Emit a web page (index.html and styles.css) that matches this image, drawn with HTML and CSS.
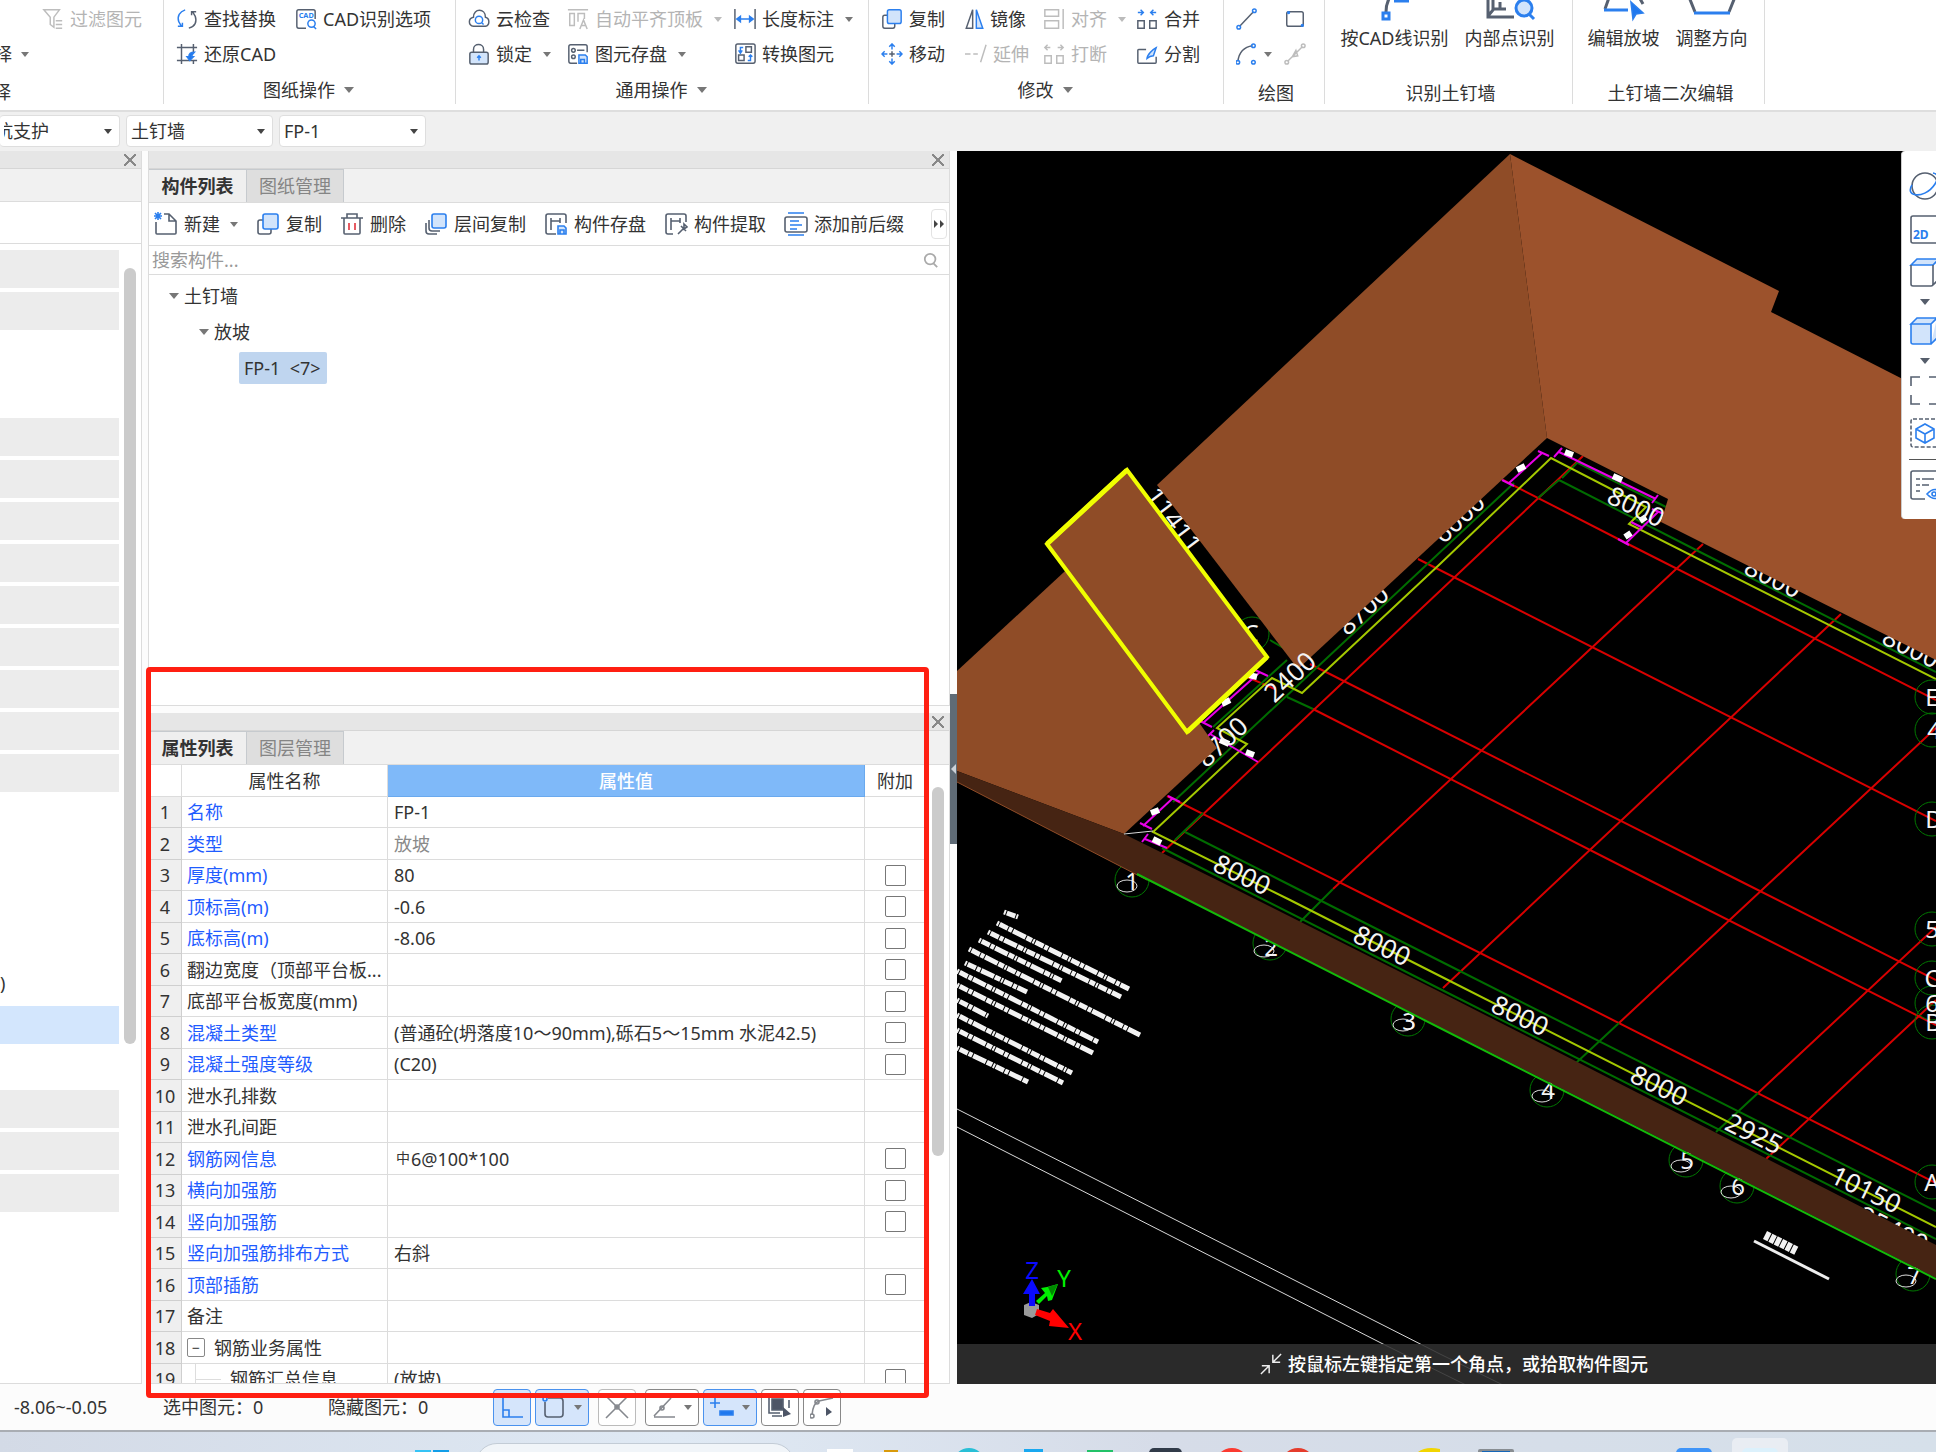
FILE: index.html
```
<!DOCTYPE html>
<html lang="zh-CN">
  <head>
    <meta charset="UTF-8" />
    <meta name="viewport" content="width=device-width, initial-scale=1.0" />
    <title>土钉墙 - 构件列表</title>
    <link rel="stylesheet" href="styles.css">
  </head>
  <body>
    <!-- Shared icons -->
    <svg class="defs" aria-hidden="true">
      <symbol id="i-copy" viewBox="0 0 24 24"><path class="d" d="M7 8H4a2 2 0 0 0-2 2v10a2 2 0 0 0 2 2h9a2 2 0 0 0 2-2v-3" /><rect class="b f" x="7" y="2" width="15" height="15" rx="2" /></symbol>
      <symbol id="i-layer" viewBox="0 0 24 24"><path class="d" d="M5 8v8a3 3 0 0 0 3 3h8M2 11v8a3 3 0 0 0 3 3h8" /><rect class="b f" x="8" y="2" width="14" height="14" rx="2" /></symbol>
      <symbol id="i-save" viewBox="0 0 24 24"><path class="d" d="M12 22H4a2 2 0 0 1-2-2V4a2 2 0 0 1 2-2h16a2 2 0 0 1 2 2v7M7 6v12M7 9h9M16 6v5" /><path class="b f" d="M14 14h6l2 2v6h-8zM16 22v-4h4v4" /></symbol>
      <symbol id="i-cube" viewBox="0 0 30 30"><path d="M2 8h20v20H4q-2 0-2-2zM2 8l6-6h20l-6 6zM22 28l6-6V2" /></symbol>
    </svg>

    <header class="ribbon">
      <section class="group g-select">
        <div class="tools">
          <button class="tool off" disabled><svg class="icon" viewBox="0 0 24 24"><path d="M2 2h17l-6 8v11l-4-3v-8zM15 14h7M15 18h7M15 22h7" /></svg>过滤图元</button>
          <button class="tool cut">择<i class="caret"></i></button>
        </div>
        <h2 class="cut">择</h2>
      </section>
      <section class="group g-drawing">
        <div class="tools">
          <button class="tool"><svg class="icon" viewBox="0 0 24 24"><path class="b" d="M10 2C4 4 1 9 3 15l3 5M2 20h5v-4" /><path class="d" d="M14 22c7-2 9-7 7-13l-3-5M22 4h-5v4" /></svg>查找替换</button>
          <button class="tool"><svg class="icon" viewBox="0 0 24 24"><path class="d" d="M12 22H4a2 2 0 0 1-2-2V4a2 2 0 0 1 2-2h16a2 2 0 0 1 2 2v8" /><text class="tiny" x="4" y="11">CAD</text><circle class="b" cx="18" cy="17" r="4" /><path class="b" d="M20 20l3 3" /></svg>CAD识别选项</button>
          <button class="tool"><svg class="icon" viewBox="0 0 24 24"><path class="d" d="M6 1v22M19 1v9M19 19v4M1 5h22M1 19h22" /><path class="b bf" d="M20 10c-4 0-6 2-6 5h-2l3 4 4-4h-2c0-2 1-3 3-5z" /></svg>还原CAD</button>
        </div>
        <h2>图纸操作<i class="caret big"></i></h2>
      </section>
      <section class="group g-common">
        <div class="tools">
          <button class="tool"><svg class="icon" viewBox="0 0 24 24"><path class="d" d="M6 20c-6-1-6-9 0-10 0-10 13-10 13 0 5 1 5 9 0 10z" /><circle class="b" cx="12" cy="13" r="4" /><path class="b" d="M15 16l2 2" /></svg>云检查</button>
          <button class="tool off" disabled><svg class="icon" viewBox="0 0 24 24"><path d="M1 2h22M3 6h5v13H3zM12 15V6h7v6M14 23l4-10 4 10M15 19h6" /></svg>自动平齐顶板<i class="caret"></i></button>
          <button class="tool"><svg class="icon" viewBox="0 0 24 24"><path class="d" d="M1 1v22M23 1v22" /><path class="b bf" d="M3 12h18M7 9l-4 3 4 3zM17 9l4 3-4 3z" /></svg>长度标注<i class="caret"></i></button>
          <button class="tool"><svg class="icon" viewBox="0 0 24 24"><path class="d" d="M6 11V7c0-7 11-7 11 0v4" /><rect class="d f" x="2" y="10" width="20" height="13" rx="2" /><path class="b" d="M12 14v5M10 16l2-2 2 2" /></svg>锁定<i class="caret"></i></button>
          <button class="tool"><svg class="icon" viewBox="0 0 24 24"><path class="d" d="M11 22H4a2 2 0 0 1-2-2V4a2 2 0 0 1 2-2h16a2 2 0 0 1 2 2v6M11 8h8" /><circle class="d" cx="7" cy="8" r="2" /><circle class="d" cx="7" cy="15" r="2" /><path class="b f" d="M13 13h7l2 2v7h-9zM15 22v-4h4v4" /></svg>图元存盘<i class="caret"></i></button>
          <button class="tool"><svg class="icon" viewBox="0 0 24 24"><rect class="d" x="2" y="1" width="21" height="21" rx="2" /><path class="d" d="M13 4h6v6h-6zM5 13h6v6H5z" /><path class="b" d="M10 5H7v5M5 8l2 3 2-3M15 19h3v-5M16 15l2-2 2 2" /></svg>转换图元</button>
        </div>
        <h2>通用操作<i class="caret big"></i></h2>
      </section>
      <section class="group g-modify">
        <div class="tools">
          <button class="tool"><svg class="icon"><use href="#i-copy" /></svg>复制</button>
          <button class="tool"><svg class="icon narrow" viewBox="0 0 20 24"><path class="d" d="M8 2v20H1z" /><path class="b f" d="M12 2v20h7z" /></svg>镜像</button>
          <button class="tool off" disabled><svg class="icon" viewBox="0 0 24 24"><path d="M2 2h15v7H2zM2 14h15v8H2zM22 1v22" /></svg>对齐<i class="caret"></i></button>
          <button class="tool"><svg class="icon" viewBox="0 0 24 24"><path class="b" d="M2 5h6M5 2l3 3-3 3M22 5h-6M19 2l-3 3 3 3" /><path class="d" d="M2 14h7v8H2zM15 14h7v8h-7z" /></svg>合并</button>
          <button class="tool"><svg class="icon" viewBox="0 0 24 24"><path class="b" d="M12 1v6M9 4l3-3 3 3M12 17v6M9 20l3 3 3-3M1 12h6M4 9l-3 3 3 3M17 12h6M20 9l3 3-3 3" /><path class="d" d="M12 9v6M9 12h6" /></svg>移动</button>
          <button class="tool off" disabled><svg class="icon" viewBox="0 0 24 24"><path d="M0 12h6M9 12h5M23 2l-6 19" /></svg>延伸</button>
          <button class="tool off" disabled><svg class="icon" viewBox="0 0 24 24"><path d="M2 5h6M5 2L2 5l3 3M22 5h-6M19 2l3 3-3 3M2 14h7v8H2zM15 14h7v8h-7z" /></svg>打断</button>
          <button class="tool"><svg class="icon" viewBox="0 0 24 24"><path class="d" d="M11 7H3q-1 0-1 1v13q0 1 1 1h18q1 0 1-1v-6" /><path class="b f" d="M12 17c0-4 6-10 10-12l-3 9c-2 0-5 1-7 3z" /></svg>分割</button>
        </div>
        <h2>修改<i class="caret big"></i></h2>
      </section>
      <section class="group g-draw">
        <div class="tools">
          <button class="tool" aria-label="直线"><svg class="icon" viewBox="0 0 24 24"><path class="d" d="M4 20L19 4" /><circle class="b" cx="3" cy="21" r="2" /><circle class="b" cx="20" cy="3" r="2" /></svg></button>
          <button class="tool" aria-label="矩形"><svg class="icon" viewBox="0 0 24 24"><rect class="d" x="3" y="4" width="18" height="16" rx="2" /><circle class="b" cx="5" cy="5" r="1" /><circle class="b" cx="20" cy="19" r="1" /></svg></button>
          <button class="tool" aria-label="弧线"><svg class="icon" viewBox="0 0 24 24"><path class="d" d="M2 20Q4 5 18 3" /><circle class="b" cx="2" cy="21" r="2" /><circle class="b" cx="19" cy="3" r="2" /><circle class="b" cx="19" cy="21" r="2" /></svg><i class="caret"></i></button>
          <button class="tool off" disabled aria-label="点加长度"><svg class="icon" viewBox="0 0 24 24"><path d="M4 20L20 4M9 15l4-7 2 6z" /><circle cx="3" cy="21" r="2" /><circle cx="21" cy="3" r="2" /></svg></button>
        </div>
        <h2 class="low">绘图</h2>
      </section>
      <section class="group g-detect">
        <div class="tools large">
          <button class="tool"><svg class="icon-l" viewBox="0 0 36 30"><path class="d w" d="M9 20Q9 8 17 0" /><path class="b w" d="M17 9h15M6 21h6v6H6z" /></svg>按CAD线识别</button>
          <button class="tool"><svg class="icon-l" viewBox="0 0 36 30"><path class="d w" d="M-4 0v25h26M1 0v18l-5 6M1 17h13M8 10v7" /><circle class="b w f" cx="32" cy="16" r="8" /><path class="b w" d="M37 22l5 5" /></svg>内部点识别</button>
        </div>
        <h2 class="low">识别土钉墙</h2>
      </section>
      <section class="group g-edit">
        <div class="tools large">
          <button class="tool"><svg class="icon-l" viewBox="0 0 36 30"><path class="d w" d="M5 0L-1 17M33 5l4 7" /><path class="b w" d="M-2 18h24" /><path class="b bf" d="M25 10l12 11-7 1-3 5z" /></svg>编辑放坡</button>
          <button class="tool"><svg class="icon-l" viewBox="0 0 36 30"><path class="d w" d="M-5 5l6 15M41 5l-6 15" /><path class="b w" d="M0 21h36" /></svg>调整方向</button>
        </div>
        <h2 class="low">土钉墙二次编辑</h2>
      </section>
    </header>

    <nav class="filters">
      <label class="pick first"><select aria-label="专业"><option>基坑支护</option></select></label>
      <label class="pick"><select aria-label="构件类型"><option>土钉墙</option></select></label>
      <label class="pick"><select aria-label="构件"><option>FP-1</option></select></label>
    </nav>

    <main class="workspace">
      <aside class="panel nav-panel">
        <div class="title-bar"><button class="close" aria-label="关闭"></button></div>
        <div class="nav-head"></div>
        <div class="nav-tools"></div>
        <div class="nav-body">
          <ul class="nav-list">
            <li class="fill"></li><li class="fill"></li><li></li><li></li><li class="fill"></li><li class="fill"></li>
            <li class="fill"></li><li class="fill"></li><li class="fill"></li><li class="fill"></li><li class="fill"></li>
            <li class="fill"></li><li class="fill"></li><li></li><li></li><li></li><li></li><li>)</li>
            <li class="current"></li><li></li><li class="fill"></li><li class="fill"></li><li class="fill"></li>
          </ul>
          <div class="thumb"></div>
        </div>
      </aside>

      <div class="docks">
        <section class="panel">
          <div class="title-bar"><button class="close" aria-label="关闭"></button></div>
          <div class="tabs"><button class="tab active">构件列表</button><button class="tab">图纸管理</button></div>
          <div class="list-tools">
            <button class="tool"><svg class="icon" viewBox="0 0 24 24"><path class="d" d="M2 10v11q0 1 1 1h18q1 0 1-1V9l-7-7h-5M15 2v7h7" /><path class="b" d="M0 4h8M4 0v8M1 1l6 6M7 1L1 7" /></svg>新建<i class="caret"></i></button>
            <button class="tool"><svg class="icon"><use href="#i-copy" /></svg>复制</button>
            <button class="tool"><svg class="icon" viewBox="0 0 24 24"><path class="d" d="M1 6h22M7 6V2h10v4M4 6v15q0 1 1 1h14q1 0 1-1V6" /><path class="r" d="M9 11v7M15 11v7" /></svg>删除</button>
            <button class="tool"><svg class="icon"><use href="#i-layer" /></svg>层间复制</button>
            <button class="tool"><svg class="icon"><use href="#i-save" /></svg>构件存盘</button>
            <button class="tool"><svg class="icon" viewBox="0 0 24 24"><path class="d" d="M9 22H4a2 2 0 0 1-2-2V4a2 2 0 0 1 2-2h16a2 2 0 0 1 2 2v6M7 6v12M7 9h9M16 6v5M14 22l5-5M17 14l5 5M20 12l3 3-3 2z" /></svg>构件提取</button>
            <button class="tool"><svg class="icon" viewBox="0 0 24 24"><rect class="d" x="1" y="5" width="22" height="15" rx="2" /><path class="b" d="M4 1h16M4 23h16M6 9h9M6 13h12M6 17h7" /></svg>添加前后缀</button>
            <button class="more" aria-label="更多"><svg viewBox="0 0 10 8"><path d="M0 0l4 4-4 4zM6 0l4 4-4 4z" /></svg></button>
          </div>
          <div class="search">
            <input type="text" placeholder="搜索构件..." aria-label="搜索构件">
            <svg class="icon-s" viewBox="0 0 18 18"><circle cx="8" cy="8" r="6" /><path d="M12 13l4 4" /></svg>
          </div>
          <ul class="tree">
            <li><i class="caret big"></i>土钉墙</li>
            <li class="l2"><i class="caret big"></i>放坡</li>
            <li class="l3"><span>FP-1  &lt;7&gt;</span></li>
          </ul>
        </section>

        <section class="panel">
          <div class="title-bar"><button class="close" aria-label="关闭"></button></div>
          <div class="tabs"><button class="tab active">属性列表</button><button class="tab">图层管理</button></div>
          <div class="props-body">
            <table class="props">
              <colgroup><col class="c-num"><col class="c-name"><col><col class="c-add"></colgroup>
              <thead>
                <tr><th></th><th>属性名称</th><th class="picked">属性值</th><th>附加</th></tr>
              </thead>
              <tbody>
                <tr><td>1</td><td class="key">名称</td><td>FP-1</td><td></td></tr>
                <tr><td>2</td><td class="key">类型</td><td class="muted">放坡</td><td></td></tr>
                <tr><td>3</td><td class="key">厚度(mm)</td><td>80</td><td><input type="checkbox" aria-label="附加 厚度"></td></tr>
                <tr><td>4</td><td class="key">顶标高(m)</td><td>-0.6</td><td><input type="checkbox" aria-label="附加 顶标高"></td></tr>
                <tr><td>5</td><td class="key">底标高(m)</td><td>-8.06</td><td><input type="checkbox" aria-label="附加 底标高"></td></tr>
                <tr><td>6</td><td>翻边宽度（顶部平台板...</td><td></td><td><input type="checkbox" aria-label="附加 翻边宽度"></td></tr>
                <tr><td>7</td><td>底部平台板宽度(mm)</td><td></td><td><input type="checkbox" aria-label="附加 底部平台板宽度"></td></tr>
                <tr><td>8</td><td class="key">混凝土类型</td><td>(普通砼(坍落度10～90mm),砾石5～15mm 水泥42.5)</td><td><input type="checkbox" aria-label="附加 混凝土类型"></td></tr>
                <tr><td>9</td><td class="key">混凝土强度等级</td><td>(C20)</td><td><input type="checkbox" aria-label="附加 混凝土强度等级"></td></tr>
                <tr><td>10</td><td>泄水孔排数</td><td></td><td></td></tr>
                <tr><td>11</td><td>泄水孔间距</td><td></td><td></td></tr>
                <tr><td>12</td><td class="key">钢筋网信息</td><td><span class="rebar">中</span>6@100*100</td><td><input type="checkbox" aria-label="附加 钢筋网信息"></td></tr>
                <tr><td>13</td><td class="key">横向加强筋</td><td></td><td><input type="checkbox" aria-label="附加 横向加强筋"></td></tr>
                <tr><td>14</td><td class="key">竖向加强筋</td><td></td><td><input type="checkbox" aria-label="附加 竖向加强筋"></td></tr>
                <tr><td>15</td><td class="key">竖向加强筋排布方式</td><td>右斜</td><td></td></tr>
                <tr><td>16</td><td class="key">顶部插筋</td><td></td><td><input type="checkbox" aria-label="附加 顶部插筋"></td></tr>
                <tr><td>17</td><td>备注</td><td></td><td></td></tr>
                <tr><td>18</td><td><div class="branch"><button class="fold" aria-label="折叠">−</button>钢筋业务属性</div></td><td></td><td></td></tr>
                <tr><td>19</td><td><div class="leaf">钢筋汇总信息</div></td><td>(放坡)</td><td><input type="checkbox" aria-label="附加 钢筋汇总信息"></td></tr>
              </tbody>
            </table>
            <div class="thumb"></div>
          </div>
        </section>
        <div class="marker"></div>
        <div class="splitter"></div>
      </div>

      <section class="viewport">
        <svg class="scene" viewBox="957 151 979 1233" preserveAspectRatio="xMinYMin slice">
          <!-- Sheet border -->
          <path class="sheet" d="M957 1109L1440 1354L1503 1385M957 1127L1383 1344L1466 1385" />
          <!-- Axis grid -->
          <path class="axis" d="M1583 456L1162 853M1703 544L1333 889M1841 614L1443 988M1936 728L1619 1023M1936 927L1758 1093M1936 1000L1766 1159" />
          <path class="axis" d="M1503 480L1626 543L1936 700M1418 559L1936 821M1310 664L1738 880L1936 980M1247 677L1275 689M1313 709L1649 880L1936 1025M1167 796L1375 900L1936 1183" />
          <!-- Dimension lines -->
          <path class="dim" d="M1173 802L1514 483M1213 727L1287 660M1578 463L1666 507M1559 480L1696 550L1936 672M1559 480L1538 498M1185 832L1280 880L1440 961L1936 1211M1162 848L1440 989L1936 1239M1287 697L1313 709M1203 813L1175 840M1333 889L1300 922M1619 1023L1576 1063M1758 1093L1716 1132M1562 478L1580 460M1270 640L1287 650" />
          <path class="edge" d="M1936 1227L1440 976L1290 900L1153 832L1247 744L1217 728L1272 678L1302 693L1440 564L1551 458L1646 507L1629 524L1936 679" />
          <path class="mark" d="M1143 826L1173 798M1140 823L1152 829M1168 796L1180 802M1145 839L1167 848M1148 834L1142 842M1203 723L1260 672M1200 721L1212 727M1255 670L1268 676M1210 734L1258 762M1214 730L1207 737M1509 483L1542 453M1502 480L1514 486M1538 451L1549 456M1559 452L1656 499M1562 448L1554 457M1658 495L1652 503M1626 543L1658 512M1618 539L1629 545M1652 509L1664 514M1631 522L1643 528" />
          <path class="blob" d="M1151 813L1159 810M1153 839L1161 843M1249 675L1257 677M1222 704L1230 700M1220 740L1229 744M1246 752L1254 755M1517 470L1525 466M1565 452L1573 455M1613 476L1622 480M1625 537L1631 533M1640 521L1646 517" />
          <!-- Axis bubbles -->
          <g class="bubble">
            <circle cx="1132" cy="880" r="17" /><circle cx="1270" cy="943" r="17" /><circle cx="1408" cy="1019" r="17" /><circle cx="1547" cy="1090" r="17" />
            <circle cx="1686" cy="1160" r="17" /><circle cx="1737" cy="1186" r="17" /><circle cx="1913" cy="1274" r="17" /><circle cx="1252" cy="634" r="17" />
            <circle cx="1932" cy="697" r="17" /><circle cx="1932" cy="730" r="17" /><circle cx="1932" cy="819" r="17" /><circle cx="1932" cy="929" r="17" />
            <circle cx="1932" cy="978" r="17" /><circle cx="1932" cy="1003" r="17" /><circle cx="1932" cy="1022" r="17" /><circle cx="1932" cy="1182" r="17" />
          </g>
          <g class="ring">
            <ellipse cx="1127" cy="886" rx="10" ry="6" /><ellipse cx="1264" cy="951" rx="10" ry="6" /><ellipse cx="1403" cy="1025" rx="10" ry="6" /><ellipse cx="1542" cy="1096" rx="10" ry="6" />
            <ellipse cx="1681" cy="1166" rx="10" ry="6" /><ellipse cx="1731" cy="1192" rx="10" ry="6" /><ellipse cx="1906" cy="1281" rx="10" ry="6" />
          </g>
          <g class="tag">
            <text x="1132" y="890">1</text><text x="1271" y="956">2</text><text x="1409" y="1030">3</text><text x="1548" y="1099">4</text>
            <text x="1687" y="1169">5</text><text x="1738" y="1195">6</text><text x="1914" y="1284">7</text><text x="1251" y="642">C</text>
            <text x="1932" y="706">E</text><text x="1934" y="739">4</text><text x="1934" y="828">D</text><text x="1932" y="938">5</text>
            <text x="1932" y="987">C</text><text x="1932" y="1012">6</text><text x="1933" y="1031">B</text><text x="1932" y="1191">A</text>
          </g>
          <g class="size">
            <text transform="translate(1242 875) rotate(26)" y="9">8000</text>
            <text transform="translate(1382 946) rotate(26)" y="9">8000</text>
            <text transform="translate(1520 1016) rotate(26)" y="9">8000</text>
            <text transform="translate(1659 1086) rotate(26)" y="9">8000</text>
            <text transform="translate(1754 1134) rotate(26)" y="9">2925</text>
            <text transform="translate(1866 1190) rotate(26)" y="9">10150</text>
            <text transform="translate(1893 1230) rotate(26)" y="9">25400</text>
            <text transform="translate(1636 507) rotate(26)" y="9">8000</text>
            <text transform="translate(1773 578) rotate(26)" y="9">8000</text>
            <text transform="translate(1911 648) rotate(26)" y="9">8000</text>
            <text transform="translate(1459 518) rotate(-43)" y="9">6000</text>
            <text transform="translate(1363 610) rotate(-43)" y="9">8700</text>
            <text transform="translate(1222 742) rotate(-43)" y="9">8700</text>
            <text transform="translate(1174 520) rotate(53)" y="9">11411</text>
          </g>
          <!-- Slope faces -->
          <path class="face" d="M1510 154L1157 485L1298 669L1547 438z" />
          <path class="face lit" d="M1510 154L1779 291L1771 312L1936 396V660L1661 522L1668 499L1547 438z" />
          <path class="face" d="M957 671L1077 560L1200 724L1217 748L1124 834L957 771z" />
          <path class="face dark" d="M957 771L1124 834L1217 880L1440 992L1936 1245V1278L1440 1027L1147 880L957 782z" />
          <path class="rim" d="M957 782L1147 880" />
          <path class="toe" d="M1137 874L1440 1028L1936 1279" />
          <path class="picked" d="M1127 470L1047 544L1187 732L1267 657z" />
          <path class="picked thick" d="M1127 470L1047 544M1187 732L1267 657" />
          <path class="sheet" d="M1124 834L1153 831" />
          <text class="single" transform="translate(1290 677) rotate(-43)" y="9">2400</text>
          <!-- Design notes, too small to be readable at this zoom -->
          <path class="notes" d="M1004 912L1018 917M997 923L1129 989M988 932L1121 997M979 940L1062 981M969 949L1140 1035M965 963L1027 992M957 971L1098 1042M957 985L1093 1053M957 1000L988 1016M957 1015L1072 1073M957 1030L1063 1083M957 1048L1028 1082" />
          <path class="notes name" d="M1765 1235L1797 1251" />
          <path class="under" d="M1754 1241L1829 1279" />
          <!-- Axis tripod -->
          <path fill="#9a9a9a" d="M1024 1305l7-3 8 3v9l-7 4-8-3z" />
          <path fill="#0a0aff" d="M1029 1306v-12h-6l9-15 8 15h-5v12z" />
          <path fill="#00f000" d="M1036 1301l9-8-4-5 6-1 11-3-6 16-4 1-1-5-8 8z" />
          <path fill="#008a00" d="M1058 1284l-6 12-4-9z" />
          <path fill="#f00" d="M1037 1309l13 4 3-4 16 19-20-2 1-5-15-6z" />
          <g class="tripod"><text x="1032" y="1279" fill="#0a0aff">Z</text><text x="1064" y="1287" fill="#00f000">Y</text><text x="1075" y="1340" fill="#f00">X</text></g>
        </svg>

        <div class="view-tools">
          <button aria-label="动态观察"><svg viewBox="0 0 30 30"><circle class="d" cx="16" cy="15" r="13" /><path class="b" d="M24 2c6 1 5 6 2 11-5 8-15 13-22 10-4-2-3-6-1-9" /></svg></button>
          <button aria-label="二维视图"><svg viewBox="0 0 30 30"><rect class="d" x="2" y="2" width="34" height="27" rx="2" /><text x="4" y="25">2D</text></svg></button>
          <button aria-label="俯视"><svg viewBox="0 0 30 30"><path class="b f" d="M2 8l6-6h22l-6 6z" /><path class="d" d="M2 8v19q0 2 2 2h18q2 0 2-2V8M24 28l6-6" /></svg></button>
          <i class="caret big"></i>
          <button aria-label="实体显示"><svg class="b f" viewBox="0 0 30 30"><use href="#i-cube" /></svg></button>
          <i class="caret big"></i>
          <button aria-label="全屏"><svg viewBox="0 0 30 30"><path class="d" d="M2 11V2h9M20 2h12M2 20v9h9M20 29h12" /></svg></button>
          <button aria-label="局部三维"><svg viewBox="0 0 30 30"><rect class="d dash" x="2" y="1" width="34" height="28" rx="2" /><path class="b" d="M16 6l9 5v9l-9 5-9-5v-9zM7 11l9 5 9-5M16 16v9" /></svg></button>
          <hr>
          <button aria-label="显示设置"><svg viewBox="0 0 30 30"><path class="d" d="M32 1H4Q2 1 2 3v24q0 2 2 2h12M7 9h4M13 9h12M7 15h4M13 15h7M7 21h4" /><path class="b" d="M18 24q8-9 16 0-8 9-16 0z" /><circle class="b" cx="25" cy="24" r="2" /></svg></button>
        </div>
        <p class="hint"><svg viewBox="0 0 24 24"><path d="M23 1l-9 9M14 2v8h8M1 23l9-9M2 14h8v8" /></svg>按鼠标左键指定第一个角点，或拾取构件图元</p>
      </section>
    </main>

    <footer class="status">
      <span class="range">-8.06~-0.05</span>
      <span class="count">选中图元：0</span>
      <span class="count">隐藏图元：0</span>
      <div class="snaps">
        <button class="snap on" aria-label="正交"><svg viewBox="0 0 24 24"><path class="b" d="M3 2v20h20M3 15h6v7" /></svg></button>
        <button class="snap on wide" aria-label="捕捉"><svg viewBox="0 0 24 24"><path class="d" d="M6 3h12q3 0 3 3v13q0 3-3 3H6q-3 0-3-3V7" /><circle class="b" cx="3" cy="4" r="2" /></svg><i class="caret"></i></button>
        <button class="snap pale gap" aria-label="交点"><svg viewBox="0 0 24 24"><path class="g" d="M1 1l22 22M23 1L1 23" /><circle class="g" cx="12" cy="12" r="2" /></svg></button>
        <button class="snap wide gap" aria-label="角度"><svg viewBox="0 0 24 24"><path class="g" d="M2 21L19 3M2 22h21" /><circle class="g" cx="10" cy="13" r="2" /></svg><i class="caret"></i></button>
        <button class="snap on wide" aria-label="动态输入"><svg viewBox="0 0 24 24"><path class="b" d="M5 3v10M0 8h10" /><path class="b bf" d="M10 16h13v4H10z" /></svg><i class="caret"></i></button>
        <button class="snap" aria-label="多图选择"><svg viewBox="0 0 24 24"><path class="d df" d="M4 4h11v11H4z" /><path class="d" d="M1 1h17M1 1v17h11M4 21h10M21 5v8" /><path class="df" d="M15 12l8 7-8 3z" /></svg></button>
        <button class="snap" aria-label="折线选择"><svg viewBox="0 0 24 24"><path class="g" d="M2 20q1-12 7-14l14-3" /><circle class="g" cx="2" cy="21" r="2" /><circle class="g" cx="7" cy="7" r="2" /><path class="df" d="M16 12l6 5-6 4z" /></svg></button>
      </div>
    </footer>

    <div class="taskbar">
      <svg class="start" viewBox="0 0 34 4"><path fill="#35c3f5" d="M0 1h16v3H0z" /><path fill="#129ee8" d="M18 1h16v3H18z" /></svg>
      <input class="task-search" type="search" aria-label="搜索">
      <svg class="apps" viewBox="800 1432 1136 20" preserveAspectRatio="xMinYMin slice">
        <path fill="#fff" d="M827 1449h26v3h-26z" /><path fill="#d99a0b" d="M884 1450h14v2h-14z" />
        <circle fill="#29bfd6" cx="969" cy="1464" r="16" /><path fill="#19a8f0" d="M1024 1449h19v3h-19z" /><path fill="#23c268" d="M1087 1450h26v2h-26z" />
        <rect fill="#313b49" x="1149" y="1448" width="33" height="20" rx="5" /><circle fill="#fb3a30" cx="1232" cy="1465" r="17" /><circle fill="#e53c2c" cx="1298" cy="1465" r="17" />
        <path fill="#f2d500" d="M1418 1452q8-6 22-3v3z" /><rect fill="#888d92" x="1478" y="1449" width="36" height="8" rx="2" /><rect fill="#1566b8" x="1482" y="1451" width="28" height="8" />
        <rect fill="#3f94f8" x="1676" y="1448" width="36" height="20" rx="5" /><rect fill="#e9edf3" x="1732" y="1438" width="56" height="30" rx="5" /><rect fill="#dcf1fc" x="1742" y="1448" width="36" height="20" rx="5" />
      </svg>
    </div>
  </body>
</html>
```
FILE: styles.css
```
* {
  box-sizing: border-box;
  margin: 0;
  padding: 0;
}

body {
  display: flex;
  flex-direction: column;
  height: 100vh;
  overflow: hidden;
  background-color: #fcfcfc;
  color: #333;
  font-family: "Noto Sans", "Noto Sans CJK SC", sans-serif;
  font-size: 18px;
  line-height: 24px;
}

button,
input,
select {
  font: inherit;
  color: inherit;
  background: none;
  border: 0;
}

ul {
  list-style: none;
}

.defs {
  display: none;
}

/* Icons */
svg {
  fill: none;
  stroke-width: 1.6;
  flex: none;
}
.icon {
  width: 22px;
  height: 22px;
}
.narrow {
  width: 19px;
}
.icon-l {
  width: 36px;
  height: 30px;
  overflow: visible;
}
.d {
  stroke: #566070;
}
.b {
  stroke: #2b7fee;
}
.r {
  stroke: #e0323c;
}
.g {
  stroke: #85888e;
}
.f {
  fill: #d2e4fb;
}
.bf {
  fill: #1f78ee;
}
.df {
  fill: #4d5566;
}
.w {
  stroke-width: 3px;
}
.tiny {
  fill: #2b7fee;
  font-size: 8px;
  font-weight: bold;
}

.caret {
  flex: none;
  border: 4px solid transparent;
  border-top: 5px solid #777;
  border-bottom: 0;
}
.caret.big {
  border-width: 6px 5px 0;
}

/* Ribbon */
.ribbon {
  display: flex;
  flex: none;
  height: 112px;
  background-color: #fff;
  border-bottom: 2px solid #dedede;
}
.group {
  display: flex;
  flex: none;
  flex-direction: column;
  height: 104px;
  border-right: 1px solid #dcdcdc;
  padding-left: 12px;
}
.tools {
  display: grid;
  grid-template-rows: 38px 32px;
}
.group h2 {
  display: flex;
  align-items: center;
  justify-content: center;
  gap: 9px;
  margin: 8px 14px 0 0;
  font-size: 18px;
  font-weight: normal;
}
.group .low {
  margin-top: 11px;
  margin-right: 8px;
}
.tool {
  display: flex;
  align-items: center;
  gap: 6px;
  white-space: nowrap;
}
.tool .caret {
  margin-left: 5px;
}
.off {
  color: #b4b4b4;
  stroke: #bdbdbd;
}
.off .caret {
  border-top-color: #bbb;
}
.g-select {
  width: 164px;
  padding-left: 0;
}
.g-select .tools {
  padding-left: 42px;
}
.g-select .cut {
  justify-content: flex-start;
  margin-left: -48px;
}
.g-select .cut .caret {
  margin-left: 3px;
}
.g-select h2.cut {
  margin-left: -7px;
  margin-top: 10px;
}
.g-drawing {
  width: 292px;
}
.g-drawing .tools {
  grid-template-columns: 119px auto;
}
.g-common {
  width: 413px;
}
.g-common .tools {
  grid-template-columns: 99px 167px auto;
}
.g-modify {
  width: 355px;
}
.g-modify .tools {
  grid-template-columns: 84px 78px 93px auto;
}
.g-draw {
  width: 101px;
}
.g-draw .tools {
  grid-template-columns: 48px auto;
}
.g-draw .caret {
  margin-left: 0;
}
.g-detect {
  width: 248px;
}
.g-edit {
  width: 192px;
}
.large {
  grid-template-rows: 70px;
  grid-template-columns: auto auto;
  justify-content: center;
  gap: 16px;
  margin-right: 14px;
}
.large .tool {
  flex-direction: column;
  align-items: center;
  justify-content: flex-end;
  gap: 4px;
  height: 50px;
}

/* Filters */
.filters {
  display: flex;
  flex: none;
  gap: 6px;
  height: 39px;
  padding-top: 3px;
  background-color: #f0f0f0;
}
.pick {
  position: relative;
  width: 147px;
  height: 32px;
  border: 1px solid #dedede;
  border-radius: 4px;
  background-color: #fff;
}
.pick select {
  display: block;
  width: 100%;
  height: 30px;
  padding-left: 4px;
  appearance: none;
}
.pick::after {
  content: "";
  position: absolute;
  right: 7px;
  top: 13px;
  border: 4px solid transparent;
  border-top: 5px solid #444;
  border-bottom: 0;
  pointer-events: none;
}
.first {
  width: 120px;
  border-left: 0;
}
.first select {
  text-indent: -27px;
}

/* Workspace */
.workspace {
  display: grid;
  flex: 1;
  grid-template-columns: 142px 802px 1fr;
  grid-template-rows: minmax(0, 1fr);
  gap: 6px;
  min-height: 0;
}
.panel {
  display: flex;
  flex-direction: column;
  min-height: 0;
  overflow: hidden;
  background-color: #fff;
  border: 1px solid #dcdcdc;
  border-top: 0;
}
.title-bar {
  display: flex;
  flex: none;
  align-items: center;
  justify-content: flex-end;
  height: 18px;
  padding-right: 5px;
  background-color: #e6e6e6;
  border-bottom: 1px solid #d6d6d6;
}
.close {
  width: 12px;
  height: 12px;
  background:
    linear-gradient(45deg, transparent 45%, #888 45%, #888 55%, transparent 55%),
    linear-gradient(-45deg, transparent 45%, #888 45%, #888 55%, transparent 55%);
}
.thumb {
  flex: none;
  width: 12px;
  border-radius: 6px;
  background-color: #cbcbcb;
}

.nav-panel {
  border-left: 0;
}
.nav-head {
  flex: none;
  height: 33px;
  background-color: #f1f1f1;
  border-bottom: 1px solid #dcdcdc;
}
.nav-tools {
  flex: none;
  height: 42px;
  border-bottom: 1px solid #dcdcdc;
}
.nav-body {
  display: flex;
  gap: 5px;
  padding-top: 6px;
}
.nav-list {
  display: flex;
  flex: 1;
  flex-direction: column;
  gap: 4px;
}
.nav-list li {
  height: 38px;
  line-height: 38px;
}
.nav-list .fill {
  background-color: #ececec;
}
.nav-list .current {
  background-color: #d3e6fd;
}
.nav-body .thumb {
  height: 776px;
  margin: 18px 5px 0 0;
}

.docks {
  position: relative;
  display: grid;
  grid-template-rows: minmax(0, 555fr) minmax(0, 671fr);
  gap: 7px;
}
.tabs {
  display: flex;
  flex: none;
  height: 34px;
  background-color: #f1f1f1;
  border-bottom: 1px solid #dcdcdc;
}
.tab {
  width: 98px;
  color: #858585;
  background-color: #dedede;
  border: 1px solid #c6cace;
  border-bottom: 0;
}
.tab.active {
  width: 97px;
  color: #333;
  font-weight: bold;
  background-color: #efefef;
  border-right: 0;
  border-left: 0;
}
.list-tools {
  display: flex;
  flex: none;
  align-items: center;
  gap: 18px;
  height: 43px;
  padding: 0 2px 0 5px;
  border-bottom: 1px solid #dcdcdc;
}
.list-tools .icon {
  width: 24px;
  height: 24px;
}
.list-tools .caret {
  margin: 0 0 0 4px;
}
.more {
  width: 16px;
  height: 30px;
  margin-left: auto;
  border: 1px solid #e3e3e3;
  border-radius: 4px;
}
.more svg {
  display: block;
  width: 10px;
  height: 8px;
  margin: 0 2px;
  fill: #444;
}
.search {
  display: flex;
  flex: none;
  align-items: center;
  height: 29px;
  padding: 0 10px 0 3px;
  border-bottom: 1px solid #dcdcdc;
}
.search input {
  flex: 1;
}
.search input::placeholder {
  color: #999;
}
.icon-s {
  width: 16px;
  height: 16px;
  stroke: #aaa;
  stroke-width: 2px;
}

.tree {
  padding-top: 3px;
}
.tree li {
  display: flex;
  align-items: center;
  gap: 5px;
  height: 36px;
  padding-left: 20px;
}
.tree .l2 {
  padding-left: 50px;
}
.tree .l3 {
  padding-left: 90px;
}
.tree span {
  padding: 4px 6px 4px 5px;
  background-color: #bfd5ef;
  border-radius: 2px;
  white-space: pre;
}

/* Properties */
.props-body {
  display: flex;
  align-items: flex-start;
  gap: 7px;
  min-height: 0;
  overflow: hidden;
}
.props-body .thumb {
  height: 369px;
  margin: 22px 5px 0 0;
}
.props {
  flex: 1;
  width: 100%;
  table-layout: fixed;
  border-spacing: 0;
  white-space: nowrap;
}
.c-num {
  width: 33px;
}
.c-name {
  width: 206px;
}
.c-add {
  width: 60px;
}
.props tr {
  height: 31px;
}
.props tbody tr:nth-child(even) {
  height: 32px;
}
.props th,
.props td {
  border: solid #dcdcdc;
  border-width: 0 1px 1px 0;
}
.props th {
  height: 32px;
  font-weight: normal;
}
.props .picked {
  color: #fff;
  font-weight: 500;
  background-color: #7fb9f9;
  border-color: #6aa9ee;
}
.props td {
  padding-left: 6px;
}
.props td:nth-child(2) {
  padding-left: 5px;
}
.props td:first-child {
  padding: 0;
  text-align: center;
  background-color: #efefef;
  border-color: #cfcfcf;
}
.props th:last-child,
.props td:last-child {
  padding: 0;
  border-right: 0;
}
.key {
  color: #1f5cff;
}
.muted {
  color: #8a8a8a;
}
.rebar {
  padding: 0 1px 0 2px;
  font-size: 14px;
  vertical-align: 3px;
  line-height: 14px;
}
.props input {
  display: block;
  width: 21px;
  height: 21px;
  margin: 0 auto;
  appearance: none;
  border: 1px solid #777;
  border-radius: 2px;
}
.branch {
  display: flex;
  align-items: center;
  gap: 9px;
}
.fold {
  width: 18px;
  height: 19px;
  border: 1px solid #888;
  border-radius: 2px;
  font-size: 14px;
  line-height: 14px;
}
.leaf {
  display: flex;
  align-items: center;
  gap: 9px;
  margin-left: 8px;
}
.leaf::before {
  content: "";
  width: 25px;
  height: 31px;
  margin: -3px 0;
  border-left: 1px solid #ddd;
  background: linear-gradient(#ddd, #ddd) 0 50% / 100% 1px no-repeat;
}

/* Red frame around the property panel */
.marker {
  position: absolute;
  top: 516px;
  right: 21px;
  bottom: -14px;
  left: -2px;
  z-index: 2;
  border: 5px solid #ff1f12;
  border-radius: 4px;
  pointer-events: none;
}
.splitter {
  position: absolute;
  top: 543px;
  right: -7px;
  width: 7px;
  height: 150px;
  background-color: #5f6b76;
}
.splitter::after {
  content: "";
  position: absolute;
  top: 70px;
  right: 1px;
  border: 5px solid transparent;
  border-right-color: #ccd2d8;
  border-left: 0;
}

/* 3D view */
.viewport {
  position: relative;
  overflow: hidden;
  background-color: #000;
  margin-left: 1px;
}
.scene {
  display: block;
  width: 100%;
  height: 100%;
}
.scene path {
  stroke-width: 1px;
}
.sheet {
  stroke: #d8d8d8;
}
.scene .axis {
  stroke: #d80000;
  stroke-width: 2px;
}
.scene .dim {
  stroke: #006c00;
  stroke-width: 2px;
}
.scene .edge {
  stroke: #a4c800;
  stroke-width: 2px;
}
.scene .mark {
  stroke: #e800e8;
  stroke-width: 2px;
}
.scene .blob {
  stroke: #fff;
  stroke-width: 6px;
}
.bubble {
  stroke: #007800;
  stroke-width: 1px;
}
.ring {
  stroke: #ddd;
  stroke-width: 1px;
}
.tag,
.size,
.single,
.tripod {
  text-anchor: middle;
}
.tag,
.size,
.single {
  fill: #f4f4f4;
}
.tag,
.tripod {
  font-size: 24px;
}
.size,
.single {
  font-size: 26px;
}
.face {
  fill: #8f4c27;
}
.lit {
  fill: #9c522c;
}
.dark {
  fill: #462413;
}
.rim {
  stroke: #8f4c27;
}
.scene .toe {
  stroke: #14b80a;
  stroke-width: 2px;
}
.scene .picked {
  fill: #8f4c27;
  stroke: #f0ff00;
  stroke-width: 4px;
}
.scene .thick {
  stroke-width: 5px;
}
.scene .notes {
  stroke: #f2f2f2;
  stroke-width: 5px;
  stroke-dasharray: 2 1 9 1 4 1 14 1 6 1;
}
.scene .name {
  stroke-width: 9px;
  stroke-dasharray: 5 1;
}
.scene .under {
  stroke: #eee;
  stroke-width: 3px;
}

.view-tools {
  position: absolute;
  top: 0;
  right: 0;
  display: flex;
  flex-direction: column;
  gap: 13px;
  width: 35px;
  height: 368px;
  padding: 20px 0 0 7px;
  overflow: hidden;
  background-color: #fff;
  border-left: 1px solid #ccc;
  border-radius: 4px 0 0 4px;
}
.view-tools button {
  flex: none;
  height: 30px;
  text-align: left;
}
.view-tools svg {
  display: block;
  width: 30px;
  height: 30px;
  overflow: visible;
}
.view-tools text {
  fill: #2b7fee;
  font-size: 12px;
  font-weight: bold;
}
.view-tools .caret {
  align-self: flex-start;
  margin: -1px 0 -2px 11px;
  border-top-color: #555d6b;
}
.view-tools hr {
  flex: none;
  border: 0;
  border-top: 1px solid #555;
  margin: -2px 0 -3px;
}
.dash {
  stroke-dasharray: 4 2;
}

.hint {
  position: absolute;
  right: 0;
  bottom: 0;
  left: 0;
  display: flex;
  align-items: center;
  justify-content: center;
  gap: 6px;
  height: 40px;
  padding-left: 15px;
  color: #fff;
  font-weight: 500;
  background-color: rgba(48, 48, 48, 0.88);
}
.hint svg {
  width: 22px;
  height: 22px;
  stroke: #eee;
}

/* Status bar */
.status {
  display: flex;
  flex: none;
  align-items: center;
  height: 46px;
  padding-left: 14px;
}
.range {
  width: 149px;
}
.count {
  width: 165px;
}
.snaps {
  display: flex;
  gap: 4px;
}
.snap {
  display: flex;
  align-items: center;
  justify-content: center;
  gap: 8px;
  width: 38px;
  height: 37px;
  background-color: #fff;
  border: 1px solid #888;
  border-radius: 4px;
}
.snap svg {
  width: 24px;
  height: 24px;
}
.snap.wide {
  width: 54px;
}
.snap.gap {
  margin-left: 5px;
}
.snap.pale {
  border-color: #bbb;
}
.snap.on {
  background-color: #d5e5fb;
  border-color: #4a92ee;
}

/* Taskbar */
.taskbar {
  display: flex;
  flex: none;
  align-items: flex-start;
  height: 22px;
  overflow: hidden;
  background: linear-gradient(90deg, #d3dae6, #dfe9f4 35%, #d6dce8 60%, #d6e0ea);
  border-top: 2px solid #a9adb3;
}
.start {
  width: 34px;
  height: 4px;
  margin: 17px 26px 0 415px;
}
.task-search {
  width: 320px;
  height: 44px;
  margin-top: 11px;
  background-color: #f1f5f9;
  border: 1px solid #c3ccd6;
  border-radius: 22px;
}
.apps {
  flex: 1;
  height: 20px;
  margin-left: 5px;
}
```
